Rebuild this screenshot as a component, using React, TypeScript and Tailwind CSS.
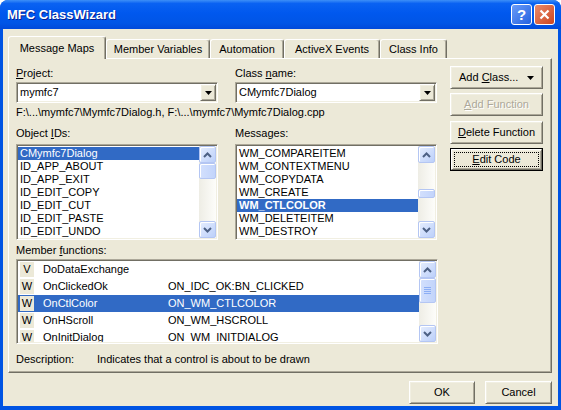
import type { ReactNode } from 'react';

const raised =
  'border border-t-white border-l-white border-r-[#716f64] border-b-[#716f64] shadow-[inset_1px_1px_0_#f1efe2,inset_-1px_-1px_0_#aca899]';
const sunken =
  'border border-t-[#aca899] border-l-[#aca899] border-r-white border-b-white shadow-[inset_1px_1px_0_#716f64,inset_-1px_-1px_0_#f1efe2] p-[1px]';

const objectIds = ['CMymfc7Dialog', 'ID_APP_ABOUT', 'ID_APP_EXIT', 'ID_EDIT_COPY', 'ID_EDIT_CUT', 'ID_EDIT_PASTE', 'ID_EDIT_UNDO'];
const messages = ['WM_COMPAREITEM', 'WM_CONTEXTMENU', 'WM_COPYDATA', 'WM_CREATE', 'WM_CTLCOLOR', 'WM_DELETEITEM', 'WM_DESTROY'];
const members = [
  { kind: 'V', name: 'DoDataExchange', map: '' },
  { kind: 'W', name: 'OnClickedOk', map: 'ON_IDC_OK:BN_CLICKED' },
  { kind: 'W', name: 'OnCtlColor', map: 'ON_WM_CTLCOLOR', selected: true },
  { kind: 'W', name: 'OnHScroll', map: 'ON_WM_HSCROLL' },
  { kind: 'W', name: 'OnInitDialog', map: 'ON_WM_INITDIALOG' },
];

const tabs = [
  { label: 'Message Maps', w: 'w-[98px]', active: true },
  { label: 'Member Variables', w: 'w-[104px]' },
  { label: 'Automation', w: 'w-[74px]' },
  { label: 'ActiveX Events', w: 'w-[96px]' },
  { label: 'Class Info', w: 'w-[67px]' },
];

const Chevron = ({ down }: { down?: boolean }) => (
  <svg width="9" height="6" viewBox="0 0 9 6" className={down ? 'rotate-180' : ''}>
    <path d="M1 5 L4.5 1.5 L8 5" fill="none" stroke="#4d6185" strokeWidth="2" />
  </svg>
);

const ScrollArrow = ({ down }: { down?: boolean }) => (
  <div className="h-[17px] w-[17px] shrink-0 rounded-[2px] border border-[#b4c6f3] bg-[linear-gradient(135deg,#e6eefe,#bcd0fa)] shadow-[inset_1px_1px_0_#ffffff] flex items-center justify-center">
    <Chevron down={down} />
  </div>
);

const ScrollBar = ({ thumb, grip }: { thumb: string; grip?: boolean }) => (
  <div className="w-[17px] h-full shrink-0 flex flex-col bg-[linear-gradient(to_right,#eeede5,#fdfdfa)]">
    <ScrollArrow />
    <div className="flex-1 flex flex-col">
      <div className={`w-[17px] rounded-[2px] border border-[#b4c6f3] bg-[linear-gradient(to_right,#d3e0fd,#c2d4fb)] shadow-[inset_1px_1px_0_#ffffff] flex flex-col items-center justify-center gap-[1px] ${thumb}`}>
        {grip && (
          <>
            <div className="w-[7px] h-[1px] bg-[#8caef5]" />
            <div className="w-[7px] h-[1px] bg-[#8caef5]" />
            <div className="w-[7px] h-[1px] bg-[#8caef5]" />
            <div className="w-[7px] h-[1px] bg-[#8caef5]" />
          </>
        )}
      </div>
    </div>
    <ScrollArrow down />
  </div>
);

const DropTriangle = () => (
  <svg width="7" height="4" viewBox="0 0 7 4">
    <path d="M0 0 H7 L3.5 4 Z" fill="#000" />
  </svg>
);

const Combo = ({ value }: { value: string }) => (
  <div className={`h-[21px] w-[202px] bg-white ${sunken}`}>
    <div className="flex h-full bg-white">
      <div className="flex-1 pl-[2px] flex items-center">{value}</div>
      <div className={`w-[16px] h-full bg-[#ece9d8] flex items-center justify-center ${raised}`}>
        <DropTriangle />
      </div>
    </div>
  </div>
);

const Button = ({ children, className = '', spread }: { children: ReactNode; className?: string; spread?: boolean }) => (
  <div className={`h-[23px] bg-[#ece9d8] flex items-center ${spread ? 'justify-between px-[8px]' : 'justify-center'} ${raised} ${className}`}>
    {children}
  </div>
);

const SimpleList = ({ items, selected, bold, thumb }: { items: string[]; selected: number; bold?: boolean; thumb: string }) => (
  <div className={`h-[96px] w-[202px] bg-white ${sunken}`}>
    <div className="flex h-full bg-white">
      <div className="flex-1 pt-[1px] overflow-hidden">
        {items.map((item, i) => (
          <div
            key={item}
            className={`h-[13px] leading-[13px] pl-[2px] ${i === selected ? `bg-[#316ac5] text-white ${bold ? 'font-bold' : ''}` : ''}`}
          >
            {item}
          </div>
        ))}
      </div>
      <ScrollBar thumb={thumb} />
    </div>
  </div>
);

export default function App() {
  return (
    <div className="w-[561px] h-[410px] bg-white overflow-hidden font-['Liberation_Sans','Arial',sans-serif] text-[11px] leading-[13px] text-black">
      <div className="w-full h-full flex flex-col rounded-t-[8px] bg-[#0054e3] overflow-hidden">
        {/* title bar */}
        <div className="h-[29px] shrink-0 flex items-center justify-between pl-[7px] pr-[6px] bg-[linear-gradient(to_bottom,#3d8ff7_0%,#0a62f2_12%,#0058ee_45%,#0055e6_80%,#0049da_100%)]">
          <span className="text-white font-bold text-[13px] [text-shadow:1px_1px_0_#0a1e8c]">MFC ClassWizard</span>
          <div className="flex gap-[2px]">
            <div className="w-[21px] h-[21px] rounded-[3px] border border-white bg-[linear-gradient(135deg,#6a9cf8,#2461e0)] flex items-center justify-center text-white font-bold text-[15px]">
              ?
            </div>
            <div className="w-[21px] h-[21px] rounded-[3px] border border-white bg-[linear-gradient(135deg,#ea8b6c,#cc4520)] flex items-center justify-center">
              <svg width="11" height="11" viewBox="0 0 11 11">
                <path d="M1.5 1.5 L9.5 9.5 M9.5 1.5 L1.5 9.5" stroke="#fff" strokeWidth="2.2" />
              </svg>
            </div>
          </div>
        </div>

        {/* body */}
        <div className="flex-1 ml-[3px] mr-[3px] mb-[4px] bg-[#ece9d8] flex flex-col">
          {/* tabs */}
          <div className="h-[22px] mt-[7px] ml-[5px] flex items-end">
            {tabs.map((t) =>
              t.active ? (
                <div
                  key={t.label}
                  className={`${t.w} h-[23px] -mb-[1px] relative z-10 bg-[#ece9d8] rounded-t-[3px] border-t border-l border-white border-r border-r-[#716f64] shadow-[inset_-1px_0_0_#aca899] flex items-center justify-center`}
                >
                  {t.label}
                </div>
              ) : (
                <div
                  key={t.label}
                  className={`${t.w} h-[19px] bg-[#ece9d8] rounded-t-[3px] border-t border-l border-white border-r border-r-[#716f64] shadow-[inset_-1px_0_0_#aca899] flex items-center justify-center`}
                >
                  {t.label}
                </div>
              )
            )}
          </div>

          {/* tab panel */}
          <div className="ml-[5px] w-[544px] h-[315px] border border-t-white border-l-white border-r-[#716f64] border-b-[#716f64] shadow-[inset_-1px_-1px_0_#aca899] flex pl-[7px] pt-[7px]">
            <div className="w-[422px] pt-[1px] flex flex-col">
              <div className="flex gap-[17px]">
                <div>
                  <div>
                    <u>P</u>roject:
                  </div>
                  <div className="mt-[2px]">
                    <Combo value="mymfc7" />
                  </div>
                </div>
                <div>
                  <div>
                    Class <u>n</u>ame:
                  </div>
                  <div className="mt-[2px]">
                    <Combo value="CMymfc7Dialog" />
                  </div>
                </div>
              </div>

              <div className="mt-[3px] whitespace-nowrap">F:\...\mymfc7\Mymfc7Dialog.h, F:\...\mymfc7\Mymfc7Dialog.cpp</div>

              <div className="flex gap-[17px] mt-[8px]">
                <div>
                  <div>
                    Object <u>I</u>Ds:
                  </div>
                  <div className="mt-[4px]">
                    <SimpleList items={objectIds} selected={0} thumb="mt-0 h-[16px]" />
                  </div>
                </div>
                <div>
                  <div>Messages:</div>
                  <div className="mt-[4px]">
                    <SimpleList items={messages} selected={4} bold thumb="mt-[26px] h-[9px]" />
                  </div>
                </div>
              </div>

              <div className="mt-[4px]">
                Member <u>f</u>unctions:
              </div>
              <div className={`mt-[2px] h-[85px] w-[422px] bg-white ${sunken}`}>
                <div className="flex h-full bg-white">
                  <div className="flex-1 overflow-hidden">
                    {members.map((m) => (
                      <div
                        key={m.name}
                        className={`h-[17px] flex items-center ${m.selected ? 'bg-[#316ac5] text-white' : ''}`}
                      >
                        <div className="ml-[2px] w-[14px] h-[15px] bg-[#ece9d8] text-black flex items-center justify-center">
                          {m.kind}
                        </div>
                        <div className="ml-[9px] w-[125px]">{m.name}</div>
                        <div>{m.map}</div>
                      </div>
                    ))}
                  </div>
                  <ScrollBar thumb="mt-0 h-[25px]" grip />
                </div>
              </div>

              <div className="mt-[9px] flex">
                <div className="w-[81px]">Description:</div>
                <div>Indicates that a control is about to be drawn</div>
              </div>
            </div>

            {/* right buttons */}
            <div className="ml-[12px] w-[93px] flex flex-col">
              <Button spread>
                <span>
                  Add <u>C</u>lass...
                </span>
                <DropTriangle />
              </Button>
              <Button className="mt-[4px] text-[#aca899] [text-shadow:1px_1px_0_#ffffff]">
                <span>
                  <u>A</u>dd Function
                </span>
              </Button>
              <Button className="mt-[5px]">
                <span>
                  <u>D</u>elete Function
                </span>
              </Button>
              <div className="mt-[4px] h-[23px] border border-black">
                <div className={`h-full bg-[#ece9d8] p-[2px] ${raised}`}>
                  <div className="h-full border border-dotted border-black flex items-center justify-center">
                    <span>
                      <u>E</u>dit Code
                    </span>
                  </div>
                </div>
              </div>
            </div>
          </div>

          {/* dialog buttons */}
          <div className="mt-[8px] flex justify-end gap-[10px] pr-[6px]">
            <Button className="w-[66px]">OK</Button>
            <Button className="w-[67px]">Cancel</Button>
          </div>
        </div>
      </div>
    </div>
  );
}
